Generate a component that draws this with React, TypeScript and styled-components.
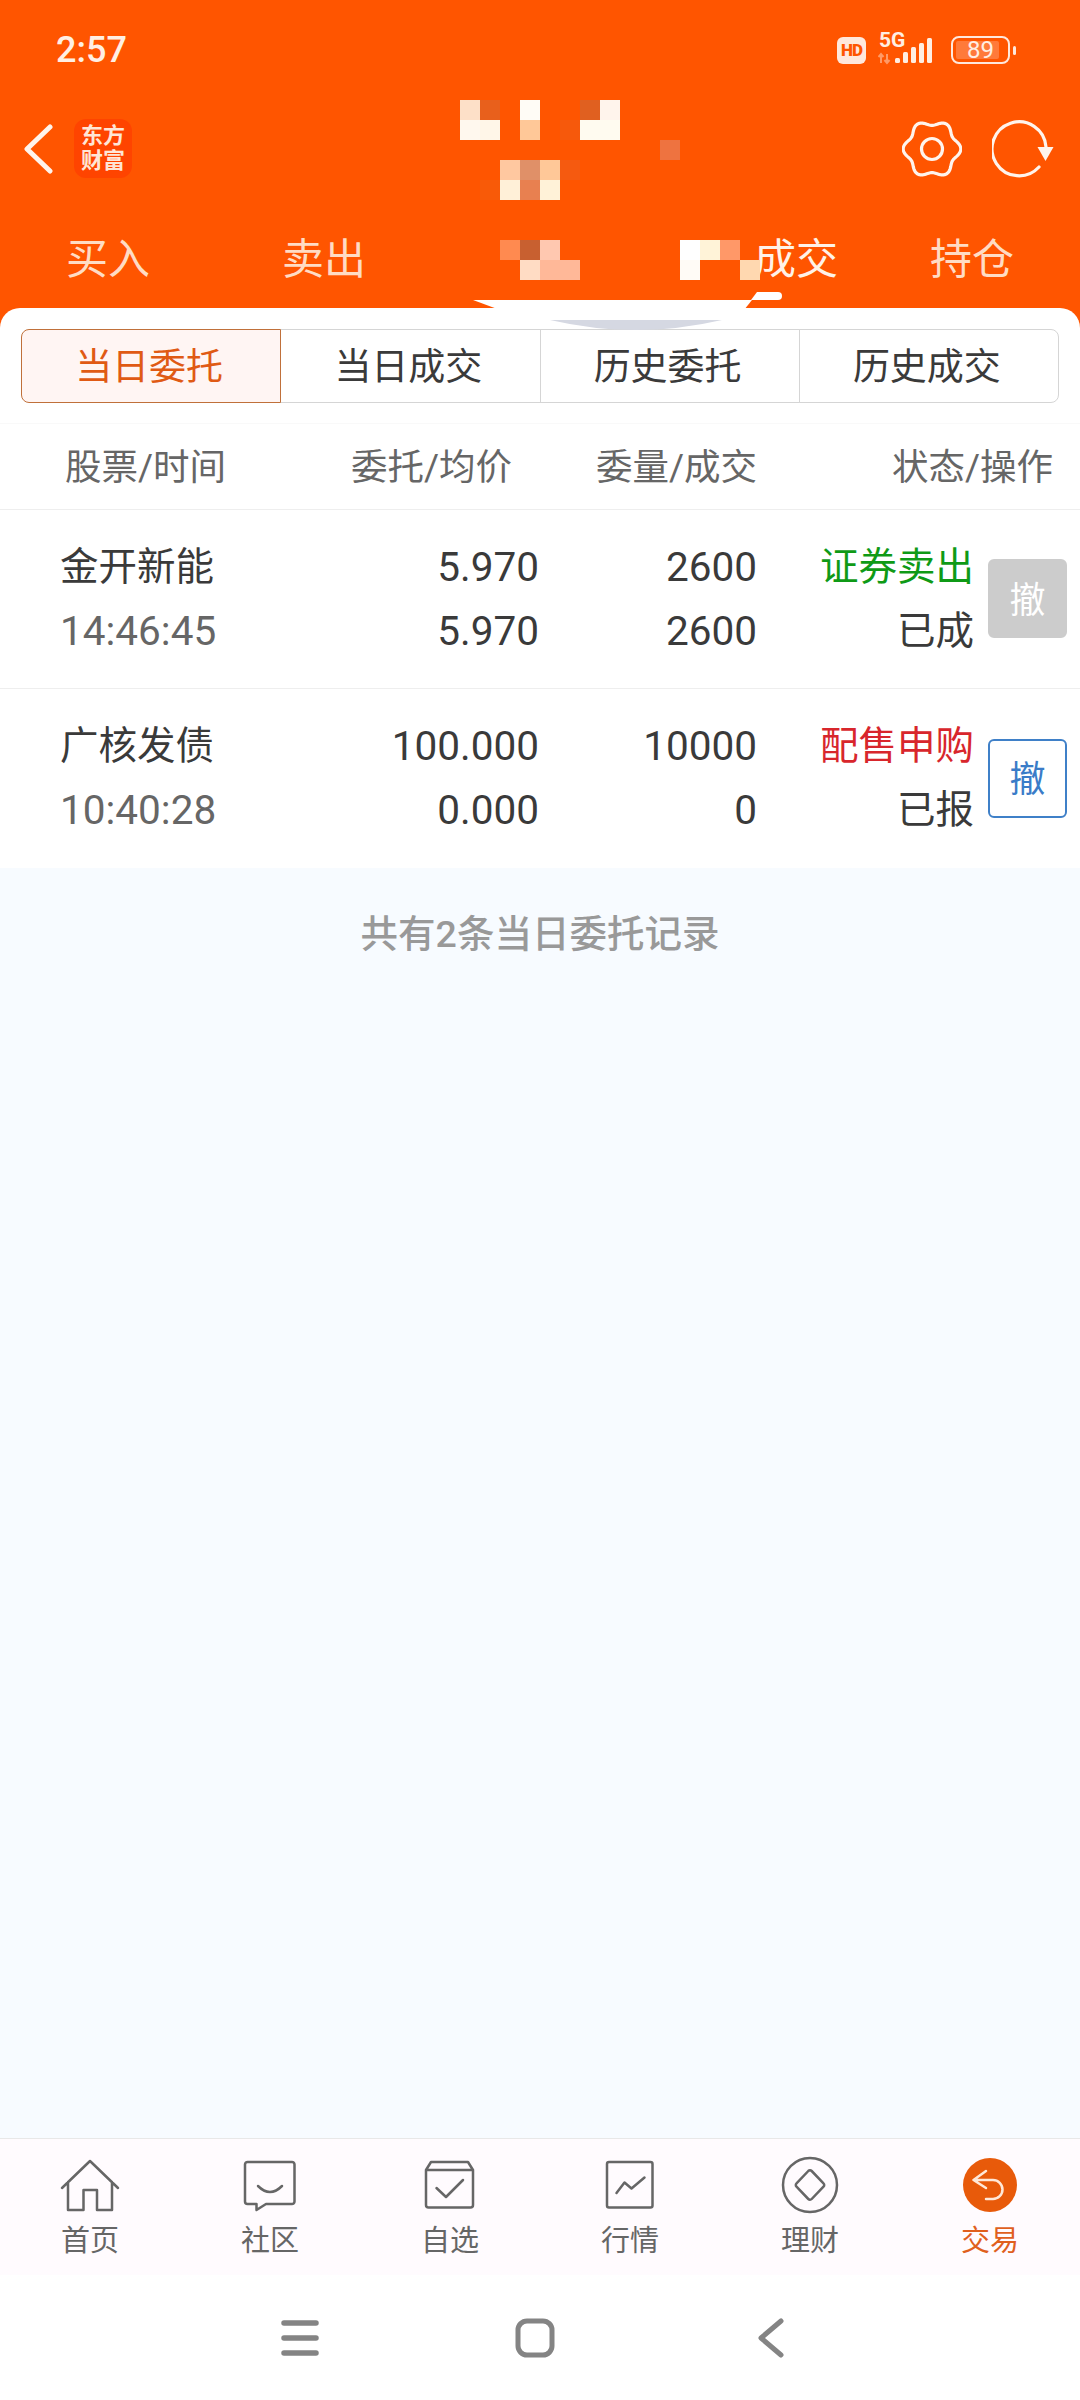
import React from "react";
import styled, { createGlobalStyle } from "styled-components";

const FONT = `Roboto, "Noto Sans CJK SC", sans-serif`;

const GlobalStyle = createGlobalStyle`
  html, body {
    margin: 0;
    padding: 0;
    background: #fff;
  }
  body {
    font-family: ${FONT};
  }
`;

// 打码的像素块: x, y, 颜色
const MOSAIC: [number, number, string][] = [
  [460, 100, "#FDE0C8"], [480, 100, "#E8601C"], [520, 100, "#FFFCF6"], [580, 100, "#E06020"], [600, 100, "#FFF4EC"],
  [460, 120, "#FFF8EE"], [480, 120, "#FFF6E8"], [520, 120, "#FFC898"], [560, 120, "#F6590C"], [580, 120, "#FFFBF0"], [600, 120, "#FFFBF0"],
  [660, 140, "#EE7340"],
  [500, 160, "#FFC8A0"], [520, 160, "#E09068"], [540, 160, "#FFC898"], [560, 160, "#F55A10"],
  [480, 180, "#F85A08"], [500, 180, "#FFF0D8"], [520, 180, "#E88050"], [540, 180, "#FFF2D8"],
  [500, 240, "#FF8A50"], [520, 240, "#C86030"], [540, 240, "#FFC8B0"], [680, 240, "#FFFFFF"], [700, 240, "#FFF3D8"], [720, 240, "#FF9868"],
  [520, 260, "#FFDCC4"], [540, 260, "#FFB898"], [560, 260, "#FFB898"], [680, 260, "#FFFBF6"], [740, 260, "#FFD8B0"],
];

const gearPath = () => {
  const pts: string[] = [];
  for (let i = 0; i < 180; i++) {
    const t = (i / 180) * Math.PI * 2;
    const r = 26.2 + 2.6 * Math.cos(6 * t);
    pts.push(`${(30 + r * Math.cos(t)).toFixed(2)} ${(30 + r * Math.sin(t)).toFixed(2)}`);
  }
  return `M${pts.join("L")}Z`;
};

const TABS = ["买入", "卖出", "", "成交", "持仓"];
const SEGMENTS = ["当日委托", "当日成交", "历史委托", "历史成交"];

const ORDERS = [
  {
    name: "金开新能", time: "14:46:45", price: "5.970", avg: "5.970", qty: "2600", done: "2600",
    kind: "证券卖出", kindColor: "#0F9A16", state: "已成", enabled: false,
  },
  {
    name: "广核发债", time: "10:40:28", price: "100.000", avg: "0.000", qty: "10000", done: "0",
    kind: "配售申购", kindColor: "#D8262C", state: "已报", enabled: true,
  },
];

const NAV_ITEMS = [
  {
    label: "首页",
    icon: <path d="M2 32 L30 5 L58 32 M8 26 V54 H23.5 V34 H37 V54 H52 V26" />,
  },
  {
    label: "社区",
    icon: (
      <>
        <path d="M7.5 6 H52 a2.5 2.5 0 0 1 2.5 2.5 V45.5 a2.5 2.5 0 0 1 -2.5 2.5 H26 L16.5 54 V48 H7.5 a2.5 2.5 0 0 1 -2.5 -2.5 V8.5 a2.5 2.5 0 0 1 2.5 -2.5 Z" />
        <path d="M18 30 Q30 42 42 30" />
      </>
    ),
  },
  {
    label: "自选",
    icon: (
      <>
        <path d="M6 14 L11 6 H48 L53 14 V49 a2.5 2.5 0 0 1 -2.5 2.5 H8.5 a2.5 2.5 0 0 1 -2.5 -2.5 Z M6 14 H53" />
        <path d="M16.5 32 L26 41 L43 24" />
      </>
    ),
  },
  {
    label: "行情",
    icon: (
      <>
        <rect x="7" y="6" width="45.5" height="45.5" rx="2" />
        <path d="M16.5 37 L24.5 26.5 L31.5 32.5 L44.5 21.5" />
      </>
    ),
  },
  {
    label: "理财",
    icon: (
      <>
        <circle cx="30" cy="29" r="27" />
        <path d="M28.3 15 a2.4 2.4 0 0 1 3.4 0 L43.5 27.3 a2.4 2.4 0 0 1 0 3.4 L31.7 43 a2.4 2.4 0 0 1 -3.4 0 L16.5 30.7 a2.4 2.4 0 0 1 0 -3.4 Z" />
      </>
    ),
  },
];

function App() {
  return (
    <>
      <GlobalStyle />
      <Page>
        <Header>
          <StatusBar>
            <Clock>2:57</Clock>
            <StatusIcons>
              <HdBadge>HD</HdBadge>
              <Network>
                <FiveG>5G</FiveG>
                <svg width="58" height="30" viewBox="0 0 58 30">
                  <path d="M3 28 V20 M0.5 22 L3 19 L5.5 22 M9 19 V27 M6.5 25 L9 28 L11.5 25" fill="none" stroke="#FF9A66" strokeWidth="2" />
                  <rect x="17" y="23" width="5" height="5" rx="1.5" fill="#FFEEE2" />
                  <rect x="25" y="17" width="5" height="11" rx="1.5" fill="#FFEEE2" />
                  <rect x="33" y="12" width="5" height="16" rx="1.5" fill="#FFEEE2" />
                  <rect x="41" y="8" width="5" height="20" rx="1.5" fill="#FFEEE2" />
                  <rect x="49" y="3" width="5" height="25" rx="1.5" fill="#FFEEE2" />
                </svg>
              </Network>
              <Battery>
                <BatteryFill />
                <BatteryText>89</BatteryText>
              </Battery>
              <BatteryNub />
            </StatusIcons>
          </StatusBar>

          <TopBar>
            <BackGroup>
              <svg width="32" height="50" viewBox="0 0 32 50">
                <path d="M28 3 L5 25 L28 47" fill="none" stroke="#FFF4EC" strokeWidth="5" strokeLinecap="round" strokeLinejoin="round" />
              </svg>
              <Logo>
                东方
                <br />
                财富
              </Logo>
            </BackGroup>
            <TopActions>
              <svg width="60" height="60" viewBox="0 0 60 60" fill="none" stroke="#FFF4EC" strokeWidth="3.2">
                <path d={gearPath()} strokeLinejoin="round" />
                <circle cx="30" cy="30" r="10.5" />
              </svg>
              <svg width="64" height="64" viewBox="0 0 64 64">
                <path d="M54 30 A27 27 0 1 0 47 50" fill="none" stroke="#FFF4EC" strokeWidth="3.2" strokeLinecap="round" />
                <path d="M45.5 30 H61.5 L53.5 44 Z" fill="#FFF4EC" />
              </svg>
            </TopActions>
          </TopBar>

          <Tabs>
            {TABS.map((tab, i) => (
              <Tab key={i} $bright={i === 3}>
                {i === 3 && <MaskedText />}
                {tab}
              </Tab>
            ))}
          </Tabs>

          {/* 顶部打码和选中标记, 盖在内容上面 */}
          <Overlay viewBox="0 0 1080 340" width="1080" height="340">
            {MOSAIC.map(([x, y, color]) => (
              <rect key={`${x}-${y}`} x={x} y={y} width="20" height="20" fill={color} />
            ))}
            <path d="M473 300 H752 L744 310 H500 Z" fill="#fff" />
            <path d="M757 292 H778 a4 4 0 0 1 0 8 H751 Z" fill="#fff" />
            <path d="M550 320 H722 Q636 340 550 320 Z" fill="#D5D8E2" />
          </Overlay>
        </Header>

        <Panel>
          <Segments>
            {SEGMENTS.map((seg, i) => (
              <Segment key={seg} $active={i === 0}>
                {seg}
              </Segment>
            ))}
          </Segments>

          <TableHead>
            <HeadCell>股票/时间</HeadCell>
            <HeadCell $right>委托/均价</HeadCell>
            <HeadCell $right>委量/成交</HeadCell>
            <HeadCell $right>状态/操作</HeadCell>
          </TableHead>

          {ORDERS.map((o) => (
            <OrderRow key={o.name}>
              <Column>
                <Cell>{o.name}</Cell>
                <NumCell $muted>{o.time}</NumCell>
              </Column>
              <Column $right>
                <NumCell>{o.price}</NumCell>
                <NumCell>{o.avg}</NumCell>
              </Column>
              <Column $right>
                <NumCell>{o.qty}</NumCell>
                <NumCell>{o.done}</NumCell>
              </Column>
              <Column $right>
                <Cell $color={o.kindColor}>{o.kind}</Cell>
                <Cell>{o.state}</Cell>
              </Column>
              <CancelButton $enabled={o.enabled}>撤</CancelButton>
            </OrderRow>
          ))}
        </Panel>

        <Records>
          <RecordNote>共有2条当日委托记录</RecordNote>
        </Records>

        <BottomNav>
          {NAV_ITEMS.map((item) => (
            <NavItem key={item.label}>
              <NavIcon viewBox="0 0 60 60">{item.icon}</NavIcon>
              <NavLabel>{item.label}</NavLabel>
            </NavItem>
          ))}
          <NavItem>
            <NavIcon viewBox="0 0 60 60">
              <circle cx="30" cy="29" r="27" fill="#E85A0A" stroke="none" />
              <path d="M26 15 L13.5 24 L26 32 M13.5 24 H33 a9.5 9.5 0 0 1 0 19 H26" stroke="#FFE8D8" />
            </NavIcon>
            <NavLabel $active>交易</NavLabel>
          </NavItem>
        </BottomNav>

        <SystemBar>
          <svg width="40" height="40" viewBox="0 0 40 40">
            <path d="M4 5 H36 M4 20 H36 M4 35 H36" stroke="#848484" strokeWidth="5.5" strokeLinecap="round" />
          </svg>
          <svg width="40" height="40" viewBox="0 0 40 40">
            <rect x="3" y="3" width="34" height="34" rx="9" fill="none" stroke="#848484" strokeWidth="5" />
          </svg>
          <svg width="40" height="40" viewBox="0 0 40 40">
            <path d="M31 3 L11 20 L31 37" fill="none" stroke="#848484" strokeWidth="5" strokeLinecap="round" strokeLinejoin="round" />
          </svg>
        </SystemBar>
      </Page>
    </>
  );
}
export default App;

const Page = styled.div`
  width: 1080px;
  height: 2400px;
  display: flex;
  flex-direction: column;
  overflow: hidden;
  background: #fff;
`;

// 顶部橙色区域
const Header = styled.header`
  position: relative;
  height: 328px;
  flex-shrink: 0;
  background: #ff5500;
`;

const StatusBar = styled.div`
  height: 100px;
  display: flex;
  align-items: center;
  justify-content: space-between;
  padding: 0 64px 0 56px;
  box-sizing: border-box;
`;

const Clock = styled.span`
  font-size: 36px;
  font-weight: 500;
  color: #fff0e4;
`;

const StatusIcons = styled.div`
  display: flex;
  align-items: center;
`;

const HdBadge = styled.span`
  width: 29px;
  height: 27px;
  display: flex;
  align-items: center;
  justify-content: center;
  border-radius: 6px;
  background: #ffe8dc;
  color: #ff5500;
  font-size: 17px;
  font-weight: 900;
  letter-spacing: -1px;
`;

const Network = styled.div`
  position: relative;
  margin-left: 12px;
  width: 60px;
  height: 30px;
  display: flex;
  align-items: flex-end;
`;

const FiveG = styled.span`
  position: absolute;
  left: 1px;
  top: -5px;
  font-size: 21px;
  line-height: 21px;
  font-weight: 700;
  color: #ffeee2;
`;

const Battery = styled.div`
  position: relative;
  width: 59px;
  height: 28px;
  margin-left: 13px;
  box-sizing: border-box;
  border: 2.5px solid #ffe8dc;
  border-radius: 8px;
  display: flex;
  align-items: center;
  justify-content: center;
`;

const BatteryFill = styled.div`
  position: absolute;
  left: 3px;
  top: 3px;
  bottom: 3px;
  width: 43px;
  border-radius: 2px;
  background: #ff7a3a;
`;

const BatteryText = styled.span`
  position: relative;
  font-size: 24px;
  color: #ffeee2;
`;

const BatteryNub = styled.div`
  width: 3px;
  height: 9px;
  margin-left: 3px;
  border-radius: 2px;
  background: #ffe8dc;
`;

const TopBar = styled.div`
  height: 100px;
  display: flex;
  align-items: center;
  justify-content: space-between;
  padding: 0 24px 3px 22px;
  box-sizing: border-box;
`;

const BackGroup = styled.div`
  display: flex;
  align-items: center;
  gap: 20px;
`;

const Logo = styled.div`
  width: 58px;
  height: 59px;
  border-radius: 12px;
  background: #ff4400;
  color: #ffe6d6;
  font-size: 22px;
  line-height: 25px;
  font-weight: 700;
  text-align: center;
  padding-top: 4px;
  box-sizing: border-box;
`;

const TopActions = styled.div`
  display: flex;
  align-items: center;
  gap: 30px;
`;

const Tabs = styled.div`
  height: 92px;
  display: flex;
  margin-top: 16px;
`;

const Tab = styled.div<{ $bright?: boolean }>`
  flex: 1;
  height: 78px;
  display: flex;
  align-items: center;
  justify-content: center;
  font-size: 42px;
  color: ${(p) => (p.$bright ? "#fff2e8" : "#ffdcc4")};
`;

const MaskedText = styled.span`
  width: 80px;
`;

const Overlay = styled.svg`
  position: absolute;
  left: 0;
  top: 0;
  z-index: 2;
  pointer-events: none;
`;

// 아래쪽 흰 패널
const Panel = styled.section`
  position: relative;
  margin-top: -20px;
  padding-top: 21px;
  border-radius: 20px 20px 0 0;
  background: #fff;
`;

const Segments = styled.div`
  margin: 0 21px;
  height: 74px;
  display: flex;
`;

const Segment = styled.div<{ $active?: boolean }>`
  flex: 1;
  margin-left: -1px;
  padding: 0 4px 4px 0;
  display: flex;
  align-items: center;
  justify-content: center;
  box-sizing: border-box;
  font-size: 37px;
  border: 1.5px solid ${(p) => (p.$active ? "#C0703A" : "#D5D5D5")};
  background: ${(p) => (p.$active ? "#FFF5F3" : "#fff")};
  color: ${(p) => (p.$active ? "#E05A14" : "#3a3a3a")};
  z-index: ${(p) => (p.$active ? 1 : 0)};

  &:first-child {
    margin-left: 0;
    border-radius: 8px 0 0 8px;
  }
  &:last-child {
    border-radius: 0 8px 8px 0;
  }
`;

const TableHead = styled.div`
  margin-top: 20px;
  height: 86.5px;
  box-sizing: border-box;
  padding: 0 27px 3px 65px;
  display: grid;
  grid-template-columns: 159px 288px 245px 296px;
  align-items: center;
  border-top: 1px solid #f9f9f9;
  border-bottom: 1.5px solid #eee;
`;

const HeadCell = styled.div<{ $right?: boolean }>`
  font-size: 36.5px;
  color: #666;
  white-space: nowrap;
  text-align: ${(p) => (p.$right ? "right" : "left")};
`;

const OrderRow = styled.div`
  height: 179px;
  box-sizing: border-box;
  padding: 0 13px 0 60px;
  display: grid;
  grid-template-columns: 260px 219px 218px 217px 79px;
  column-gap: 0;
  align-items: center;
  border-bottom: 1.5px solid #eee;

  &:last-child {
    border-bottom: none;
  }
`;

const Column = styled.div<{ $right?: boolean }>`
  display: flex;
  flex-direction: column;
  align-items: ${(p) => (p.$right ? "flex-end" : "flex-start")};
`;

const Cell = styled.div<{ $muted?: boolean; $color?: string }>`
  height: 64px;
  line-height: 64px;
  font-size: 38.5px;
  white-space: nowrap;
  color: ${(p) => p.$color || (p.$muted ? "#666" : "#3a3a3a")};
`;

const NumCell = styled(Cell)`
  font-size: 40.5px;
`;

const CancelButton = styled.div<{ $enabled?: boolean }>`
  width: 79px;
  height: 79px;
  margin-left: 14px;
  padding-bottom: 4px;
  box-sizing: border-box;
  border-radius: 6px;
  display: flex;
  align-items: center;
  justify-content: center;
  font-size: 36px;
  border: 2px solid ${(p) => (p.$enabled ? "#3F80C8" : "#CCC")};
  background: ${(p) => (p.$enabled ? "#fff" : "#CCC")};
  color: ${(p) => (p.$enabled ? "#3A7CC8" : "#fff")};
`;

const Records = styled.div`
  flex: 1;
  background: #f7fbff;
  padding-top: 41px;
  text-align: center;
`;

const RecordNote = styled.div`
  font-size: 37.5px;
  line-height: 50px;
  font-weight: 500;
  color: #999;
`;

const BottomNav = styled.nav`
  height: 137px;
  box-sizing: border-box;
  flex-shrink: 0;
  display: grid;
  grid-template-columns: repeat(6, 180px);
  border-top: 1.5px solid #e8e8e8;
  background: #fffbfe;
`;

const NavItem = styled.div`
  display: flex;
  flex-direction: column;
  align-items: center;
  padding-top: 17px;
`;

const NavIcon = styled.svg`
  width: 60px;
  height: 60px;
  fill: none;
  stroke: #666;
  stroke-width: 2.5;
  stroke-linejoin: round;
  stroke-linecap: round;
`;

const NavLabel = styled.span<{ $active?: boolean }>`
  margin-top: 5px;
  font-size: 29px;
  line-height: 40px;
  color: ${(p) => (p.$active ? "#E0601E" : "#666")};
`;

const SystemBar = styled.div`
  height: 125px;
  flex-shrink: 0;
  display: flex;
  align-items: center;
  justify-content: center;
  gap: 195px;
  padding-right: 10px;
  background: #fff;
`;
